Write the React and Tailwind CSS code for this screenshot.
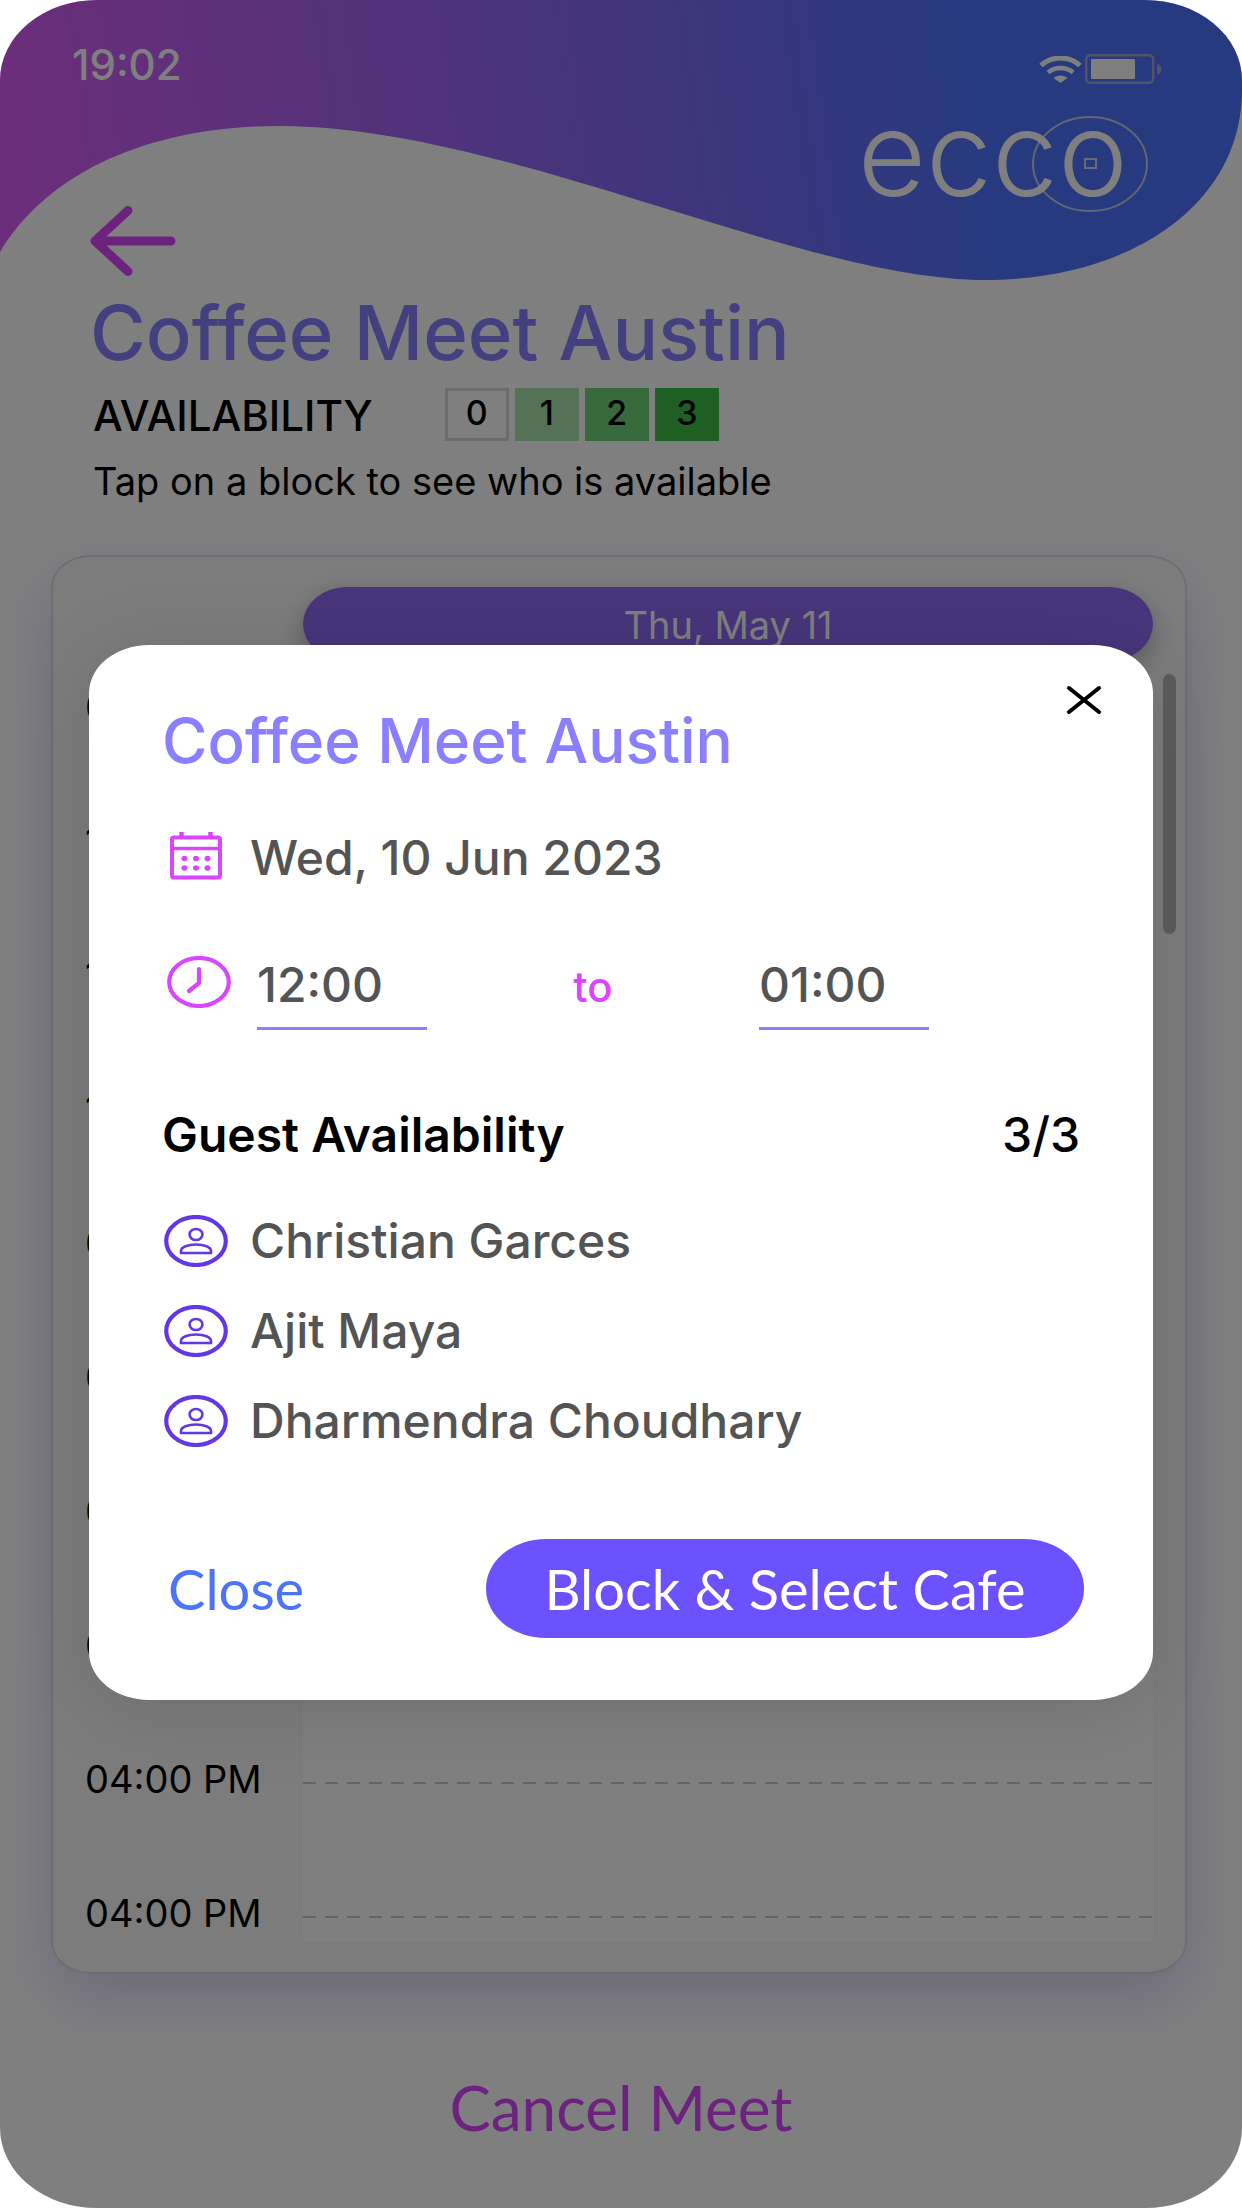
import { useState } from "react";

// Time slots shown down the left side of the schedule
const slots = [
  "09:00 AM",
  "10:00 AM",
  "11:00 AM",
  "12:00 PM",
  "01:00 PM",
  "02:00 PM",
  "03:00 PM",
  "04:00 PM",
  "04:00 PM",
  "04:00 PM",
];

const levels = [
  { count: 0, className: "border-[3px] border-[#d8d8d8] bg-white" },
  { count: 1, className: "bg-[#a8e6ac]" },
  { count: 2, className: "bg-[#70d27a]" },
  { count: 3, className: "bg-[#3ebe48]" },
];

const guests = ["Christian Garces", "Ajit Maya", "Dharmendra Choudhary"];

const Wave = () => (
  <svg
    viewBox="0 0 1242 280"
    preserveAspectRatio="none"
    className="absolute inset-x-0 top-0 w-full h-[280px]"
    aria-hidden="true"
  >
    <defs>
      <linearGradient id="wave" x1="0" y1="0.03" x2="1" y2="0">
        <stop offset="0" stopColor="#d65cf4" />
        <stop offset="0.12" stopColor="#c460f4" />
        <stop offset="0.5" stopColor="#846af8" />
        <stop offset="0.77" stopColor="#5074fe" />
        <stop offset="1" stopColor="#5074fe" />
      </linearGradient>
    </defs>
    <path
      fill="url(#wave)"
      d="M0 0H1242V90C1242 205 1130 280 985 280C800 280 505 126 279 126C150 126 48 172 0 252Z"
    />
  </svg>
);

const Wifi = () => (
  <svg viewBox="0 0 43 27" className="w-[43px] h-[27px]" fill="none" stroke="currentColor" strokeWidth="5">
    <path d="M2 9.5C12.5 -0.5 30.5 -0.5 41 9.5" />
    <path d="M9 16.5C16 10.5 27 10.5 34 16.5" strokeWidth="4.5" />
    <path d="M14.5 22C18 18.5 25 18.5 28.5 22L21.5 27Z" fill="currentColor" stroke="none" />
  </svg>
);

const Battery = () => (
  <svg viewBox="0 0 77 30" className="w-[77px] h-[30px]" fill="none">
    <rect x="1.2" y="1.2" width="67" height="27.6" rx="4" stroke="#a2a8c8" strokeWidth="2.4" />
    <rect x="6" y="5" width="44" height="20" rx="1" fill="currentColor" />
    <path d="M72 9.5C75.5 11 76.5 13 76.5 15.5S75.5 19.5 72 21Z" fill="#a2a8c8" />
  </svg>
);

const Logo = () => (
  <svg viewBox="0 0 308 96" className="w-[308px] h-24" role="img" aria-label="ecco">
    <ellipse cx="250" cy="48" rx="57" ry="47" fill="none" stroke="#c4cae6" strokeWidth="2" />
    <text
      x="288"
      y="80"
      textAnchor="end"
      fill="#fff"
      className="font-['Inter',sans-serif] font-light text-[118px]"
    >
      ecco
    </text>
    <rect x="245" y="43" width="11" height="9" fill="none" stroke="#d0d4ea" strokeWidth="2" />
  </svg>
);

const CalendarIcon = () => (
  <svg viewBox="0 0 52 48" className="mb-1 w-[52px] h-12" fill="none" stroke="currentColor" strokeWidth="4">
    <rect x="2" y="5.5" width="48" height="40" rx="2" />
    <path d="M2 16.5H50" strokeWidth="3.5" />
    <path d="M11.5 0V5M40.5 0V5" strokeWidth="4.5" />
    <g fill="currentColor" stroke="none">
      {[14.5, 26, 37.5].map((x) => (
        <g key={x}>
          <ellipse cx={x} cy="26.5" rx="3" ry="2.7" />
          <ellipse cx={x} cy="36" rx="3" ry="2.7" />
        </g>
      ))}
    </g>
  </svg>
);

const ClockIcon = () => (
  <svg viewBox="0 0 64 52" className="w-16 h-[52px]" fill="none" stroke="currentColor" strokeWidth="4.2">
    <ellipse cx="32" cy="26" rx="29.8" ry="24" />
    <path d="M32 13V27L22 35" strokeLinecap="round" strokeLinejoin="round" />
  </svg>
);

const GuestIcon = () => (
  <svg viewBox="0 0 64 52" className="w-16 h-[52px]" fill="none" stroke="currentColor" strokeWidth="2.6">
    <ellipse cx="32" cy="26" rx="29.8" ry="24" strokeWidth="4.2" />
    <ellipse cx="32" cy="19.5" rx="6.4" ry="5.5" />
    <path d="M17 38V36C17 32 24 29.5 32 29.5S47 32 47 36V38Z" />
  </svg>
);

const Schedule = () => (
  <section className="relative ml-[51px] mr-[55px] mt-[54px] rounded-[40px/32px] border-2 border-[#dcdce0] bg-[#f9f9fb] pl-8 pr-8 py-[30px] shadow-[0_24px_60px_rgba(120,90,240,0.26)]">
    <div className="pl-[218px]">
      <h2 className="h-[74px] rounded-[44px/37px] bg-[#906af6] text-center text-[38px] leading-[76px] text-white shadow-[0_8px_24px_rgba(0,0,0,0.25)]">
        Thu, May 11
      </h2>
    </div>
    <ul className="mt-7">
      {slots.map((slot, i) => (
        <li key={i} className="flex h-[134px] last:h-[47px]">
          <span className="w-[218px] text-[38px] leading-9">{slot}</span>
          <div className="flex-1 bg-white pt-[21px]">
            <div className="h-[2px] bg-[repeating-linear-gradient(90deg,#c8c8c8_0_13px,transparent_13px_22px)]" />
          </div>
        </li>
      ))}
    </ul>
    <div className="absolute right-[9px] top-[117px] h-[260px] w-[13px] rounded-full bg-[#bab6b8]" />
  </section>
);

const MeetDialog = ({ onClose }) => {
  const [from, setFrom] = useState("12:00");
  const [to, setTo] = useState("01:00");

  const timeInput =
    "w-[170px] border-b-[3px] border-[#8a80ff] bg-transparent pb-3 text-[48px] font-medium leading-[60px] text-[#545454] outline-none";

  return (
    <div className="absolute inset-0 flex items-start bg-black/50 px-[89px] pt-[645px]">
      <div
        role="dialog"
        aria-label="Coffee Meet Austin"
        className="relative w-full rounded-[60px/48px] bg-white pl-[73px] pr-[69px] pt-[66px] pb-[62px] shadow-[0_10px_80px_rgba(0,0,0,0.12)]"
      >
        <button aria-label="Dismiss" onClick={onClose} className="absolute right-[51px] top-10">
          <svg viewBox="0 0 36 30" className="h-[30px] w-9" fill="none" stroke="#000" strokeWidth="4" strokeLinecap="round">
            <path d="M3 3L33 27M33 3L3 27" />
          </svg>
        </button>

        <h2 className="text-[62px] font-medium leading-[60px] text-[#8a80ff] [font-variant-ligatures:none]">
          Coffee Meet Austin
        </h2>

        <div className="mt-[59px] flex h-14 items-center gap-7 pl-2 text-[#d946ff]">
          <CalendarIcon />
          <p className="text-[48px] font-medium text-[#545454]">Wed, 10 Jun 2023</p>
        </div>

        <div className="mt-[69px] flex items-start text-[#d946ff]">
          <span className="pl-[5px] pt-px">
            <ClockIcon />
          </span>
          <label className="sr-only" htmlFor="from">
            From
          </label>
          <input id="from" className={`ml-[26px] ${timeInput}`} value={from} onChange={(e) => setFrom(e.target.value)} />
          <span className="w-[332px] pt-[2px] text-center text-[42px] font-medium leading-[60px]">to</span>
          <label className="sr-only" htmlFor="to">
            To
          </label>
          <input id="to" className={timeInput} value={to} onChange={(e) => setTo(e.target.value)} />
        </div>

        <div className="mt-[77px] flex h-14 items-center justify-between pr-1 text-[48px] font-semibold">
          <h3>Guest Availability</h3>
          <span className="font-medium">3/3</span>
        </div>

        <ul className="mt-[50px] flex flex-col gap-[34px] pl-[2px]">
          {guests.map((guest) => (
            <li key={guest} className="flex h-14 items-center gap-[22px] text-[#6337e6]">
              <GuestIcon />
              <span className="text-[48px] font-medium text-[#545454]">{guest}</span>
            </li>
          ))}
        </ul>

        <div className="mt-[90px] flex items-center justify-between font-['Lato',sans-serif] text-[56px]">
          <button onClick={onClose} className="pl-[6px] text-[#4d74f8]">
            Close
          </button>
          <button className="h-[99px] w-[598px] rounded-[60px/49px] bg-[#6b52fe] text-white">
            Block &amp; Select Cafe
          </button>
        </div>
      </div>
    </div>
  );
};

const App = () => {
  const [open, setOpen] = useState(true);

  return (
    <div className="bg-white">
      <main className="relative min-h-screen overflow-hidden rounded-[97px/80px] bg-white font-['Inter',sans-serif] text-black">
        <Wave />

        {/* Status bar */}
        <div className="relative flex items-center justify-between pl-[72px] pr-20 pt-10 text-white">
          <span className="text-[42px] font-medium leading-[50px]">19:02</span>
          <div className="flex items-center gap-[3px] pt-2">
            <Wifi />
            <Battery />
          </div>
        </div>

        <header className="relative pl-[90px] pr-[94px]">
          <div className="mt-[26px] flex h-40 justify-between">
            <button aria-label="Back" className="self-end text-[#d646fc]">
              <svg
                viewBox="0 0 86 70"
                className="h-[70px] w-[86px]"
                fill="none"
                stroke="currentColor"
                strokeWidth="9"
                strokeLinecap="round"
                strokeLinejoin="round"
              >
                <path d="M81 35H5M38 4.5L5 35L38 65.5" />
              </svg>
            </button>
            <Logo />
          </div>

          <h1 className="mt-4 text-[76px] font-medium leading-[80px] text-[#8980ff] [font-variant-ligatures:none]">
            Coffee Meet Austin
          </h1>

          <div className="mt-[15px] flex items-center gap-[72px] pl-[3px]">
            <span className="pt-1 text-[42px] font-medium leading-[50px]">AVAILABILITY</span>
            <div className="flex gap-[6px]">
              {levels.map((level) => (
                <span
                  key={level.count}
                  className={`flex h-[53px] w-16 items-center justify-center pb-1 text-[34px] font-medium ${level.className}`}
                >
                  {level.count}
                </span>
              ))}
            </div>
          </div>

          <p className="mt-5 pl-[3px] text-[38px] leading-10">Tap on a block to see who is available</p>
        </header>

        <Schedule />

        <div className="mt-[103px] pb-[71px] text-center">
          <button className="font-['Lato',sans-serif] text-[62px] leading-[60px] text-[#d646fc]">Cancel Meet</button>
        </div>

        {open && <MeetDialog onClose={() => setOpen(false)} />}
      </main>
    </div>
  );
};

export default App;
